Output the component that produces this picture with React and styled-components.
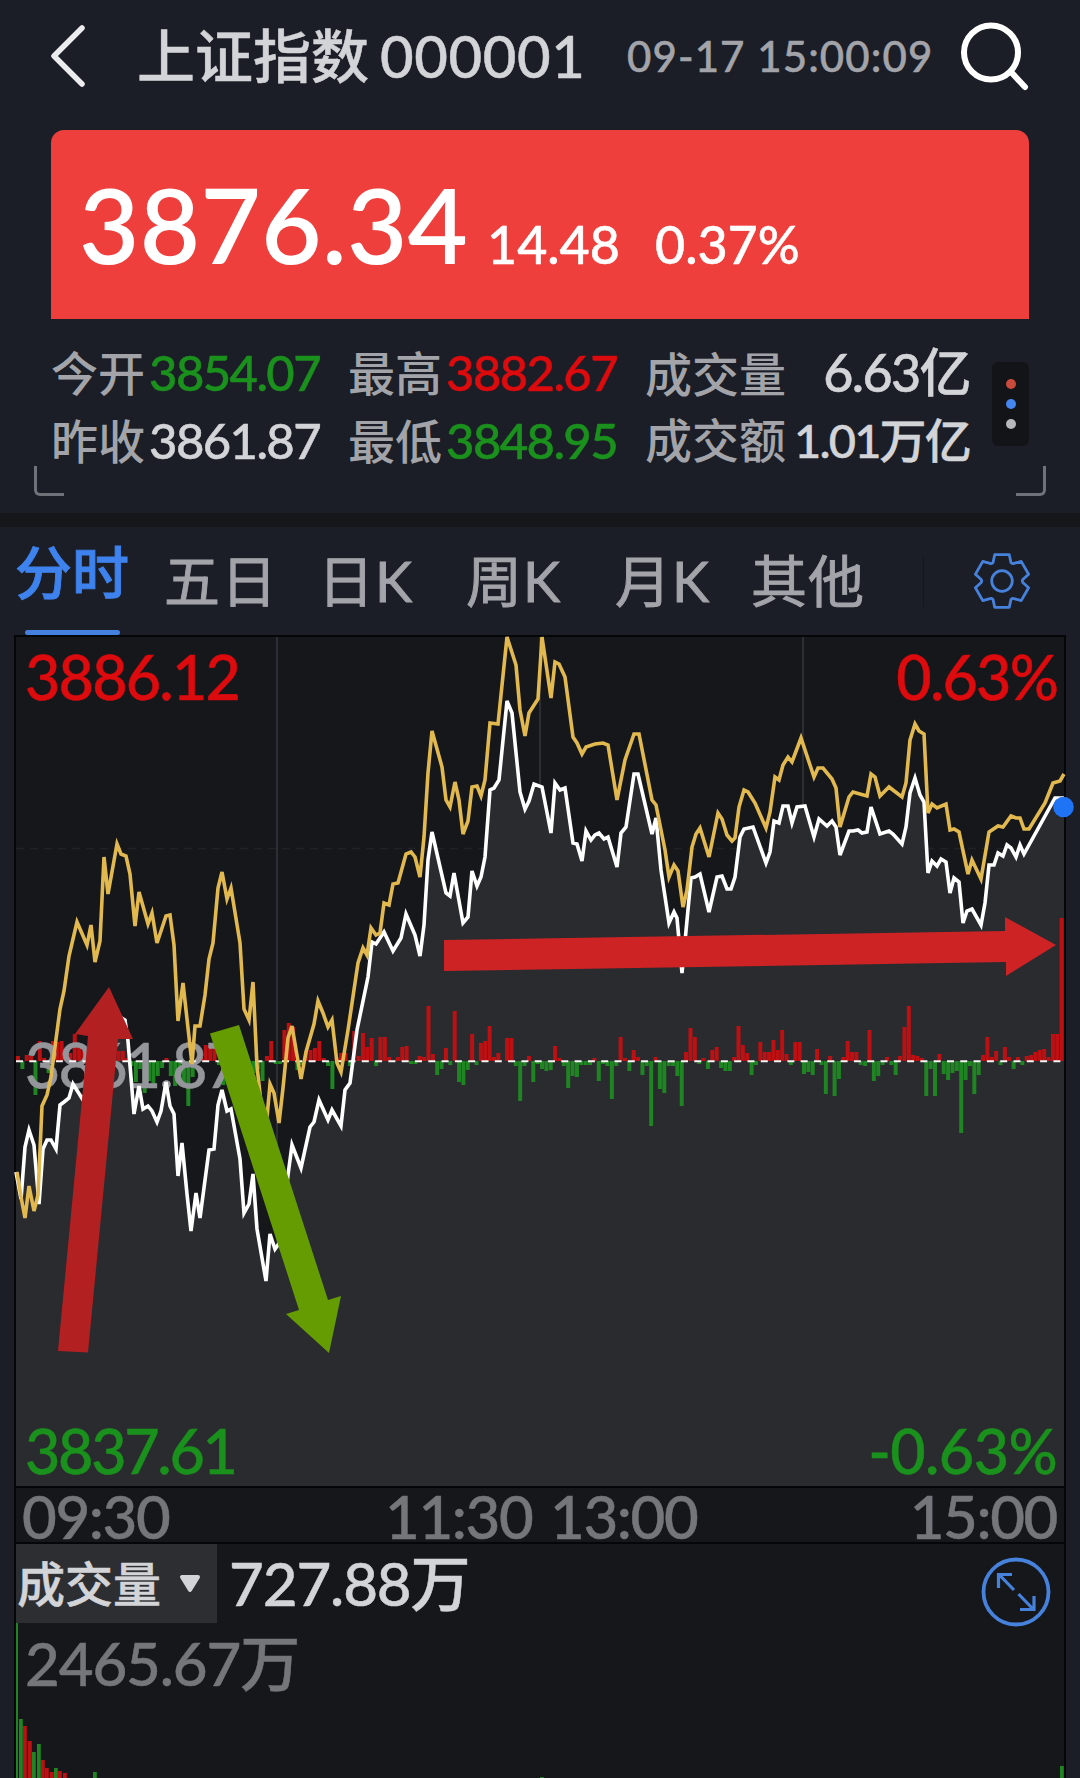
import React from 'react';
import styled, { createGlobalStyle } from 'styled-components';

const GlobalStyle = createGlobalStyle`
  * {
    box-sizing: border-box;
  }

  body {
    margin: 0;
    background: #1b1e26;
    font-family: Lato, "Noto Sans CJK SC", sans-serif;
    font-weight: 500;
    -webkit-text-stroke: 0.5px currentColor;
  }
`;

const COLORS = {
  red: '#dd0b0e',
  green: '#1b911d',
  light: '#d3d4d8',
  muted: '#a2a4aa',
  dim: '#75767a',
  blue: '#3e82ee',
};

const Page = styled.main`
  width: 1080px;
  height: 1778px;
  overflow: hidden;
  background: #1b1e26;
`;

const Header = styled.header`
  display: flex;
  align-items: center;
  height: 111px;
  padding: 0 50px;
`;

const Title = styled.h1`
  display: flex;
  align-items: baseline;
  width: 490px;
  margin: 0 0 0 51px;
  font-size: 58px;
  font-weight: 500;
  line-height: 70px;
  color: ${COLORS.light};
  white-space: nowrap;
`;

const Code = styled.span`
  margin-left: 11px;
  letter-spacing: 0.6px;
`;

const Time = styled.time`
  width: 332px;
  font-size: 42px;
  line-height: 50px;
  letter-spacing: 1.1px;
  color: ${COLORS.muted};
  white-space: nowrap;
`;

const Quote = styled.section`
  display: flex;
  align-items: baseline;
  height: 189px;
  margin: 19px 51px 0;
  padding: 32px 28px 0;
  border-radius: 13px 13px 0 0;
  background: #ef3f3c;
  color: #fff;
  line-height: 124px;
  white-space: nowrap;
`;

const Price = styled.strong`
  width: 408px;
  font-size: 104px;
  font-weight: 600;
  letter-spacing: 0.4px;
  -webkit-text-stroke: 0;
`;

const Change = styled.span`
  width: 168px;
  font-size: 52px;
`;

const Stats = styled.section`
  position: relative;
  display: flex;
  height: 194px;
  padding: 19px 51px 0;
`;

const StatGrid = styled.div`
  display: grid;
  grid-template-columns: 269px 269px 325px;
  grid-auto-rows: 68px;
  column-gap: 28px;
`;

const Stat = styled.div`
  display: flex;
  align-items: baseline;
  justify-content: space-between;
  line-height: 68px;
  white-space: nowrap;
`;

const StatLabel = styled.span`
  font-size: 47px;
  color: ${COLORS.muted};
  -webkit-text-stroke: 0;
`;

const StatValue = styled.span`
  font-size: ${(props) => props.$size || 49}px;
  letter-spacing: ${(props) => props.$spacing ?? -1.6}px;
  color: ${(props) => props.$color};
`;

const MoreButton = styled.button`
  display: flex;
  flex-direction: column;
  align-items: center;
  justify-content: center;
  gap: 10px;
  width: 37px;
  height: 84px;
  margin: 24px 0 0 22px;
  padding: 0;
  border: 0;
  border-radius: 6px;
  background: #131417;
`;

const Dot = styled.i`
  width: 10px;
  height: 10px;
  border-radius: 50%;
  background: ${(props) => props.$color};
`;

const Corner = styled.span`
  position: absolute;
  top: 147px;
  ${(props) => props.$side}: 34px;
  width: 30px;
  height: 30px;
  border-bottom: 3px solid #6f7278;
  border-${(props) => props.$side}: 3px solid #6f7278;
  border-bottom-${(props) => props.$side}-radius: 6px;
`;

const Tabs = styled.nav`
  display: grid;
  grid-template-columns: 149px 154px 148px 149px 136px 172px 1fr;
  height: 122px;
  padding-left: 15px;
  border-top: 14px solid #15171b;
`;

const Tab = styled.button`
  position: relative;
  padding: 0 0 ${(props) => (props.$active ? 18 : 0)}px;
  border: 0;
  background: none;
  font: inherit;
  font-size: ${(props) => (props.$active ? 57 : 56)}px;
  font-weight: ${(props) => (props.$active ? 500 : 400)};
  line-height: 80px;
  letter-spacing: ${(props) => (props.$active ? 0 : 1)}px;
  color: ${(props) => (props.$active ? COLORS.blue : COLORS.muted)};
  text-align: left;
  white-space: nowrap;
  -webkit-text-stroke: 0.9px currentColor;

  &:after {
    content: '';
    display: ${(props) => (props.$active ? 'block' : 'none')};
    position: absolute;
    left: 10px;
    bottom: 0;
    width: 95px;
    height: 5px;
    border-radius: 3px;
    background: #4480df;
  }
`;

const TabTools = styled.div`
  display: flex;
  align-items: center;
  gap: 50px;

  &:before {
    content: '';
    width: 1px;
    height: 51px;
    background: #14161b;
  }
`;

const Chart = styled.section`
  position: relative;
  width: 1052px;
  height: 853px;
  margin-left: 14px;
  border: 2px solid #050608;
  background: #15171b;
`;

const Plot = styled.svg`
  display: block;
  overflow: visible;
`;

const LineLayer = styled(Plot)`
  position: absolute;
  top: 0;
  left: 0;
`;

const AxisLabel = styled.span`
  position: absolute;
  top: ${(props) => props.$top}px;
  ${(props) => (props.$right ? 'right: 7px' : 'left: 9px')};
  font-size: 61px;
  line-height: 74px;
  letter-spacing: ${(props) => props.$spacing ?? -1.8}px;
  color: ${(props) => props.$color};
`;

const TimeAxis = styled.div`
  display: flex;
  height: 56px;
  width: 1052px;
  margin-left: 14px;
  padding: 0 6px;
  border: 2px solid #050608;
  border-top: 0;
  background: #15171b;
  font-size: 60px;
  line-height: 57px;
  color: ${COLORS.dim};
  letter-spacing: -1.4px;
`;

const Tick = styled.span`
  width: ${(props) => props.$width}px;
  text-align: ${(props) => props.$align || 'left'};
`;

const Volume = styled.section`
  width: 1052px;
  height: 234px;
  margin-left: 14px;
  border: 2px solid #050608;
  border-width: 0 2px;
  background: #15171b;
`;

const VolumeBar = styled.div`
  display: flex;
  align-items: center;
  height: 79px;
  padding-right: 13px;
`;

const Indicator = styled.button`
  display: flex;
  align-items: center;
  gap: 17px;
  width: 201px;
  height: 79px;
  padding: 0 0 0 1px;
  border: 0;
  background: #2d2e32;
  font: inherit;
  font-size: 48px;
  line-height: 79px;
  color: ${COLORS.light};
  white-space: nowrap;
`;

const VolumeValue = styled.span`
  flex: 1;
  padding-left: 12px;
  font-size: 60px;
  line-height: 79px;
  letter-spacing: -1.1px;
  color: ${COLORS.light};
`;

const ExpandButton = styled.button`
  display: flex;
  margin-top: 16px;
  padding: 0;
  border: 0;
  background: none;
`;

const VolumeBody = styled.div`
  position: relative;
  height: 155px;
`;

const VolumeMax = styled.span`
  position: absolute;
  top: 3px;
  left: 9px;
  font-size: 60px;
  line-height: 74px;
  letter-spacing: -1.1px;
  color: ${COLORS.dim};
`;

const stats = [
  { label: '今开', value: '3854.07', color: COLORS.green },
  { label: '最高', value: '3882.67', color: COLORS.red },
  { label: '成交量', value: '6.63亿', color: COLORS.light, size: 52, spacing: -1.6 },
  { label: '昨收', value: '3861.87', color: COLORS.light },
  { label: '最低', value: '3848.95', color: COLORS.green },
  { label: '成交额', value: '1.01万亿', color: COLORS.light, size: 47, spacing: -1.8 },
];

const tabs = ['分时', '五日', '日K', '周K', '月K', '其他'];

const priceLine =
  '16,1172 21,1199 25,1147 29,1130 34,1145 39,1204 43,1149 47,1140 51,1140 56,1149 60,1105 64,1102 69,1098 73,1084 83,1100 ' +
  '95,1060 108,1010 125,1020 128,1041 134,1114 139,1086 143,1109 148,1106 152,1111 157,1122 161,1111 166,1082 170,1106 174,1114 ' +
  '178,1176 182,1143 187,1194 191,1231 196,1193 200,1218 209,1150 214,1149 218,1105 222,1090 227,1111 231,1109 240,1159 ' +
  '244,1213 249,1204 253,1174 257,1229 266,1281 270,1234 275,1249 280,1242 288,1175 292,1145 301,1168 310,1127 314,1122 ' +
  '319,1100 328,1120 332,1110 341,1126 345,1090 350,1083 357,1030 368,977 372,942 376,944 384,932 393,951 401,938 406,914 ' +
  '415,935 420,956 424,925 428,860 432,832 446,893 450,896 454,873 463,923 468,917 472,871 477,886 481,877 485,857 490,790 ' +
  '494,788 499,780 507,701 512,713 520,792 525,809 529,801 534,784 542,787 551,833 555,783 560,790 565,788 573,843 577,844 ' +
  '582,861 586,831 591,840 595,835 599,833 604,839 608,837 617,867 621,833 626,827 634,774 638,774 652,834 656,818 661,870 ' +
  '669,923 674,912 677,918 682,973 691,878 695,877 700,874 709,912 717,877 722,876 727,889 731,889 735,877 740,837 744,829 ' +
  '753,827 766,863 770,852 774,821 779,823 783,806 788,806 792,823 797,807 805,806 814,837 819,819 827,826 832,821 836,827 ' +
  '840,855 849,831 853,831 858,830 862,833 867,832 871,807 880,834 889,831 893,834 902,844 906,827 910,793 915,778 920,795 ' +
  '924,802 928,873 932,861 937,866 941,859 946,862 950,893 954,878 959,882 963,923 967,911 972,909 981,925 985,903 989,865 ' +
  '994,865 998,853 1003,856 1007,845 1011,848 1016,857 1020,845 1024,854 1055,798 1064,798';

const averageLine =
  '17,1172 21,1197 25,1218 29,1186 34,1211 38,1195 42,1106 47,1095 51,1077 60,1009 64,991 69,956 77,922 87,945 91,925 ' +
  '95,962 100,941 104,857 108,894 117,844 121,854 126,856 130,874 135,926 139,892 148,924 152,913 157,943 166,916 170,915 ' +
  '174,945 178,1021 183,983 192,1064 195,1026 200,1026 205,995 209,959 213,943 218,888 222,872 227,899 231,888 240,943 ' +
  '244,1009 249,1020 253,982 257,1066 265,1140 270,1084 274,1093 279,1123 283,1088 288,1038 292,1026 301,1079 306,1052 ' +
  '314,1024 318,1001 323,1013 328,1027 332,1020 337,1063 341,1072 348,1030 358,963 363,948 367,955 371,928 376,935 380,933 ' +
  '384,903 389,905 393,884 398,883 406,854 411,852 415,857 420,877 424,837 428,773 432,731 442,767 446,800 450,807 455,782 ' +
  '459,800 463,834 468,821 472,787 477,786 481,796 485,780 490,723 498,724 507,637 516,665 520,710 525,736 529,713 538,699 ' +
  '542,637 551,698 555,662 559,664 565,677 573,737 577,743 582,754 586,747 595,744 603,743 608,745 617,800 625,760 634,734 ' +
  '639,734 652,800 656,805 665,850 669,877 674,865 678,871 683,907 687,890 692,847 696,834 700,828 709,857 718,813 722,819 ' +
  '727,835 732,841 735,838 739,807 744,790 748,792 755,803 766,828 770,812 775,777 779,780 783,765 788,757 792,762 801,738 ' +
  '814,777 818,768 823,768 832,779 836,788 840,827 849,797 853,792 867,796 871,774 875,777 880,796 889,787 902,797 906,783 ' +
  '910,740 915,724 919,731 924,734 928,813 932,804 937,808 946,804 950,830 954,829 959,832 968,874 972,860 981,879 989,832 ' +
  '998,826 1003,827 1011,816 1016,818 1020,818 1024,829 1029,829 1045,803 1053,783 1060,781 1064,774';

// one value per minute, positive grows up from the zero line
const momentum = [
  5, -8, 6, 5, -34, 20, 3, -12, 20, 19, 20, 8, 8, 27, 15, 10, 8, 10, 12, 8, 10, 12, 10, 10, 10, 3, -5, -21, -8, -32,
  -20, -23, -15, -7, 3, -15, -25, -9, -24, -45, -16, 3, 3, 16, 16, 15, -4, -24, 6, 10, 8, 5, -6, -10, -12, -8, -20, 5,
  20, -3, -3, 31, 38, 34, -9, -4, 10, 11, 13, 20, 3, -5, -28, 3, 8, 8, -5, 30, 5, 28, 14, 23, -5, 24, 24, 4, 0, 4, 14,
  15, -3, -3, 5, 4, 55, 7, -14, -8, 13, -4, 50, -21, -24, -9, 27, -4, 18, 20, 35, 4, 8, 0, 23, 23, -5, -40, -5, 5, -21,
  -3, -8, -10, -9, 15, 3, -5, -27, -15, -16, -4, -4, -4, 3, -20, -3, -5, -38, -5, 24, 3, -10, 11, 4, -14, -5, -65, 4,
  -28, -32, -5, -5, -15, -45, 9, 33, 24, -3, 3, -8, 11, 14, -7, -10, -10, 4, 35, 16, 8, -14, -4, 19, 9, 9, 21, 11, 31,
  7, -4, 19, 19, -13, -11, -14, 12, -4, -33, 5, -35, -18, 4, 20, 9, 9, -4, -5, 31, -20, -15, -4, 4, -4, -14, 5, 34, 55,
  6, 5, 3, -35, -8, -35, 7, -13, -19, -12, -10, -72, -19, -5, -33, -14, 6, 24, 4, 10, -4, 14, 4, -8, 4, -4, 5, 6, 9,
  11, 12, 4, 27, 27, 143,
];

const volumes = [
  [1, 155, 'g'], [4, 59, 'g'], [8, 52, 'r'], [13, 37, 'r'], [17, 26, 'g'], [22, 34, 'g'], [26, 18, 'r'],
  [30, 10, 'r'], [35, 6, 'r'], [39, 10, 'g'], [43, 7, 'r'], [48, 5, 'r'], [78, 6, 'g'], [525, 1, 'g'], [1045, 12, 'g'],
];

const ZERO = 1061;
const STEP = 1048 / 240;

const BackIcon = () => (
  <svg width="36" height="64" viewBox="0 0 36 64" fill="none" stroke="#ececee" strokeWidth="5.5" strokeLinecap="round" strokeLinejoin="round">
    <path d="M32 4 L4 32 L32 60" />
  </svg>
);

const SearchIcon = () => (
  <svg width="70" height="70" viewBox="0 0 70 70" fill="none" stroke="#fff" strokeWidth="6" strokeLinecap="round">
    <circle cx="32" cy="31.5" r="27" />
    <path d="M52 51 L66 66" />
  </svg>
);

const GearIcon = () => (
  <svg width="56" height="56" viewBox="-28 -28 56 56" fill="none" stroke="#4682dc" strokeWidth="2.8" strokeLinejoin="round">
    <path d="M-7.3 -26.3 H7.3 L9 -18.4 Q10 -16.8 12 -17.6 L19.2 -19.6 L26.6 -6.8 L20.8 -1.4 Q19.8 0 20.8 1.4 L26.6 6.8 L19.2 19.6 L12 17.6 Q10 16.8 9 18.4 L7.3 26.3 H-7.3 L-9 18.4 Q-10 16.8 -12 17.6 L-19.2 19.6 L-26.6 6.8 L-20.8 1.4 Q-19.8 0 -20.8 -1.4 L-26.6 -6.8 L-19.2 -19.6 L-12 -17.6 Q-10 -16.8 -9 -18.4 Z" />
    <circle r="10.3" />
  </svg>
);

const ExpandIcon = () => (
  <svg width="70" height="70" viewBox="-35 -35 70 70" fill="none" stroke="#4682dc" strokeWidth="3.2">
    <circle r="32.5" strokeWidth="3.8" />
    <path d="M-2 -2 L-17 -17.5 M-4 -17.5 H-17.5 V-4 M2.5 2 L17.5 17.5 M4 17.5 H18 V4" />
  </svg>
);

const CaretIcon = () => (
  <svg width="24" height="20" viewBox="0 0 24 20">
    <path d="M4 3 H20 L12 16 Z" fill={COLORS.light} stroke={COLORS.light} strokeWidth="4" strokeLinejoin="round" />
  </svg>
);

const BasePlot = () => (
  <Plot width="1048" height="849" viewBox="16 637 1048 849">
    <path d="M277 637 V1486 M540 637 V1486 M803 637 V1486" stroke="#33353b" strokeWidth="1.6" />
    <path d="M16 848.5 H1064" stroke="#202227" strokeWidth="1.5" strokeDasharray="8 6" />
    <polygon points={`16,1486 ${priceLine} 1064,1486`} fill="#292b2f" />
    {momentum.map((value, index) => (
      <rect
        key={index}
        x={16 + index * STEP}
        y={value > 0 ? ZERO - value : ZERO}
        width="4"
        height={Math.abs(value)}
        fill={value > 0 ? '#bd1013' : '#1f8422'}
      />
    ))}
  </Plot>
);

const App = () => {
  return (
    <Page>
      <GlobalStyle />
      <Header>
        <BackIcon />
        <Title>
          上证指数<Code>000001</Code>
        </Title>
        <Time>09-17 15:00:09</Time>
        <SearchIcon />
      </Header>

      <Quote>
        <Price>3876.34</Price>
        <Change>14.48</Change>
        <Change>0.37%</Change>
      </Quote>

      <Stats>
        <StatGrid>
          {stats.map((stat) => (
            <Stat key={stat.label}>
              <StatLabel>{stat.label}</StatLabel>
              <StatValue $color={stat.color} $size={stat.size} $spacing={stat.spacing}>
                {stat.value}
              </StatValue>
            </Stat>
          ))}
        </StatGrid>
        <MoreButton>
          <Dot $color="#ca4a3c" />
          <Dot $color="#4585ee" />
          <Dot $color="#b7b8bc" />
        </MoreButton>
        <Corner $side="left" />
        <Corner $side="right" />
      </Stats>

      <Tabs>
        {tabs.map((tab, index) => (
          <Tab key={tab} $active={index === 0}>
            {tab}
          </Tab>
        ))}
        <TabTools>
          <GearIcon />
        </TabTools>
      </Tabs>

      <Chart>
        <BasePlot />
        <AxisLabel $top={3} $color={COLORS.red}>3886.12</AxisLabel>
        <AxisLabel $top={3} $color={COLORS.red} $right>0.63%</AxisLabel>
        <AxisLabel $top={391} $color="#95969b">3861.87</AxisLabel>
        <AxisLabel $top={777} $color={COLORS.green} $spacing={-2.3}>3837.61</AxisLabel>
        <AxisLabel $top={777} $color={COLORS.green} $spacing={-0.6} $right>-0.63%</AxisLabel>
        <LineLayer width="1048" height="849" viewBox="16 637 1048 849">
          <path d="M16 1061.3 H1064" stroke="#f4f4f4" strokeWidth="2" strokeDasharray="7 6.3" />
          <polyline points={priceLine} fill="none" stroke="#fff" strokeWidth="3.6" />
          <polyline points={averageLine} fill="none" stroke="#e2b94f" strokeWidth="3.6" />
          <circle cx="1063.5" cy="807" r="10.3" fill="#1f74f5" />
          {/* trend arrows */}
          <polygon points="109,987 133,1039 118,1039 88,1352.5 58,1351 88,1036 75,1034" fill="#b32022" />
          <polygon points="210,1033.6 239,1025 328,1300 341,1296 329,1353 286,1314 299,1310" fill="#659c02" />
          <polygon points="444,940 1005,931 1005,917 1056,945 1006,976 1006,962 444,971" fill="#cd2325" />
        </LineLayer>
      </Chart>

      <TimeAxis>
        <Tick $width={363}>09:30</Tick>
        <Tick $width={165}>11:30</Tick>
        <Tick $width={165}>13:00</Tick>
        <Tick $width={342} $align="right">15:00</Tick>
      </TimeAxis>

      <Volume>
        <VolumeBar>
          <Indicator>
            成交量
            <CaretIcon />
          </Indicator>
          <VolumeValue>727.88万</VolumeValue>
          <ExpandButton>
            <ExpandIcon />
          </ExpandButton>
        </VolumeBar>
        <VolumeBody>
          <VolumeMax>2465.67万</VolumeMax>
          <svg width="1048" height="155" viewBox="0 0 1048 155">
            {volumes.map(([x, height, side]) => (
              <rect
                key={x}
                x={x - 1}
                y={155 - height}
                width={x === 1 ? 2 : 3.8}
                height={height}
                fill={side === 'r' ? '#bd1013' : '#1f8422'}
              />
            ))}
          </svg>
        </VolumeBody>
      </Volume>
    </Page>
  );
};

export default App;
